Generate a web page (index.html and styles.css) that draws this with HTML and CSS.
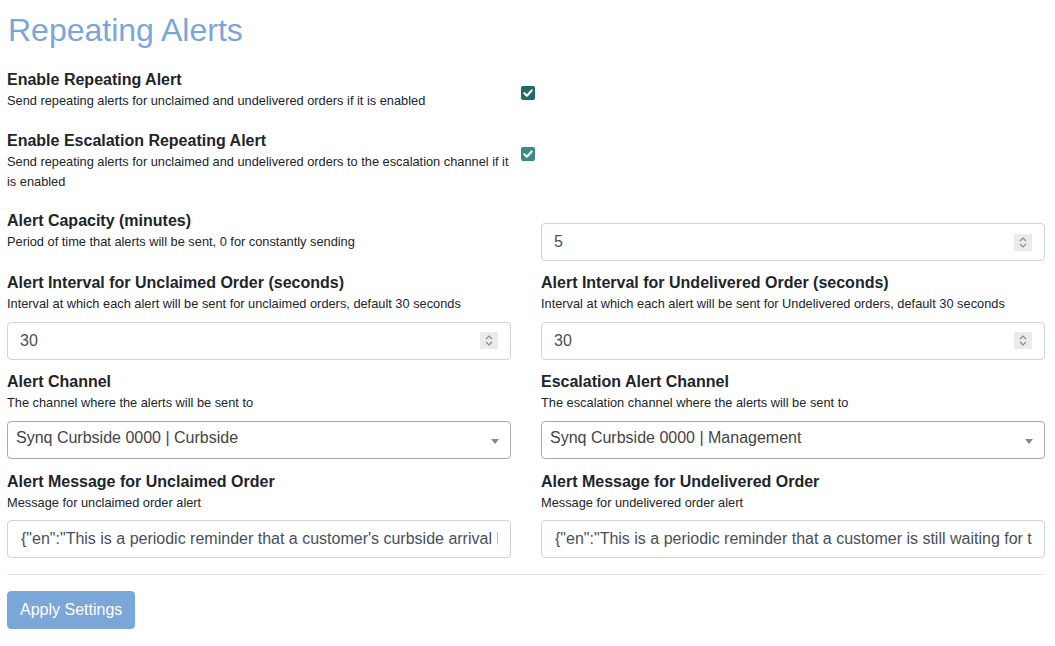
FILE: index.html
```html
<!DOCTYPE html>
<html lang="en">
<head>
<meta charset="utf-8">
<title>Repeating Alerts</title>
<link rel="stylesheet" href="styles.css">
</head>
<body>
<div class="page">
  <h2 class="title">Repeating Alerts</h2>

  <div class="check-row first">
    <div class="check-text">
      <div class="label">Enable Repeating Alert</div>
      <div class="desc">Send repeating alerts for unclaimed and undelivered orders if it is enabled</div>
    </div>
    <span class="checkbox"><svg viewBox="0 0 14 14" width="14" height="14"><path d="M3.3 7.2 L5.9 9.7 L10.7 4.5" fill="none" stroke="#fff" stroke-width="2.2" stroke-linecap="round" stroke-linejoin="round"/></svg></span>
  </div>

  <div class="check-row">
    <div class="check-text">
      <div class="label">Enable Escalation Repeating Alert</div>
      <div class="desc">Send repeating alerts for unclaimed and undelivered orders to the escalation channel if it is enabled</div>
    </div>
    <span class="checkbox light"><svg viewBox="0 0 14 14" width="14" height="14"><path d="M3.3 7.2 L5.9 9.7 L10.7 4.5" fill="none" stroke="#fff" stroke-width="2.2" stroke-linecap="round" stroke-linejoin="round"/></svg></span>
  </div>

  <div class="grid row-capacity">
    <div class="field">
      <div class="label">Alert Capacity (minutes)</div>
      <div class="desc">Period of time that alerts will be sent, 0 for constantly sending</div>
    </div>
    <div class="field">
      <div class="number-input capacity">
        <input class="bare" type="text" value="5">
        <span class="spinner"><svg viewBox="0 0 18 17" width="18" height="17"><path d="M6 7 L9 4 L12 7" fill="none" stroke="#8a8a8a" stroke-width="1.2"/><path d="M6 10 L9 13 L12 10" fill="none" stroke="#8a8a8a" stroke-width="1.2"/></svg></span>
      </div>
    </div>
  </div>

  <div class="grid row-interval">
    <div class="field">
      <div class="label">Alert Interval for Unclaimed Order (seconds)</div>
      <div class="desc">Interval at which each alert will be sent for unclaimed orders, default 30 seconds</div>
      <div class="number-input">
        <input class="bare" type="text" value="30">
        <span class="spinner"><svg viewBox="0 0 18 17" width="18" height="17"><path d="M6 7 L9 4 L12 7" fill="none" stroke="#8a8a8a" stroke-width="1.2"/><path d="M6 10 L9 13 L12 10" fill="none" stroke="#8a8a8a" stroke-width="1.2"/></svg></span>
      </div>
    </div>
    <div class="field">
      <div class="label">Alert Interval for Undelivered Order (seconds)</div>
      <div class="desc">Interval at which each alert will be sent for Undelivered orders, default 30 seconds</div>
      <div class="number-input">
        <input class="bare" type="text" value="30">
        <span class="spinner"><svg viewBox="0 0 18 17" width="18" height="17"><path d="M6 7 L9 4 L12 7" fill="none" stroke="#8a8a8a" stroke-width="1.2"/><path d="M6 10 L9 13 L12 10" fill="none" stroke="#8a8a8a" stroke-width="1.2"/></svg></span>
      </div>
    </div>
  </div>

  <div class="grid row-channel">
    <div class="field">
      <div class="label">Alert Channel</div>
      <div class="desc">The channel where the alerts will be sent to</div>
      <div class="select"><span class="select-text">Synq Curbside 0000 | Curbside</span><b class="arrow"></b></div>
    </div>
    <div class="field">
      <div class="label">Escalation Alert Channel</div>
      <div class="desc">The escalation channel where the alerts will be sent to</div>
      <div class="select"><span class="select-text">Synq Curbside 0000 | Management</span><b class="arrow"></b></div>
    </div>
  </div>

  <div class="grid row-message">
    <div class="field">
      <div class="label">Alert Message for Unclaimed Order</div>
      <div class="desc">Message for unclaimed order alert</div>
      <input class="text-input" type="text" value="{&quot;en&quot;:&quot;This is a periodic reminder that a customer's curbside arrival has not been claimed yet.&quot;}">
    </div>
    <div class="field">
      <div class="label">Alert Message for Undelivered Order</div>
      <div class="desc">Message for undelivered order alert</div>
      <input class="text-input" type="text" value="{&quot;en&quot;:&quot;This is a periodic reminder that a customer is still waiting for their order.&quot;}">
    </div>
  </div>

  <hr class="divider">
  <button class="btn" type="button">Apply Settings</button>
</div>
</body>
</html>
```

FILE: styles.css
```css
* { box-sizing: border-box; }

html, body {
  margin: 0;
  padding: 0;
  background: #fff;
}

body {
  font-family: "Liberation Sans", Arial, Helvetica, sans-serif;
  color: #212529;
}

.page {
  width: 1038px;
  margin-left: 7px;
}

.title {
  margin: 11px 0 18.5px 1px;
  font-size: 32px;
  line-height: 38px;
  font-weight: 400;
  color: #79a6d9;
}

.label {
  font-size: 16px;
  line-height: 23px;
  font-weight: 700;
  color: #212529;
}

.desc {
  font-size: 12.8px;
  line-height: 20px;
  color: #212529;
}

.check-row {
  display: flex;
  align-items: flex-start;
  margin-bottom: 17px;
}

.check-row.first { margin-bottom: 18px; }

.check-text {
  width: 504px;
}

.checkbox {
  display: block;
  width: 14px;
  height: 14px;
  margin: 18.5px 0 0 10px;
  border-radius: 2px;
  background: #1d6c6a;
}

.checkbox svg { display: block; }

.checkbox.light { background: #3b8a86; }

.grid {
  display: grid;
  grid-template-columns: 504px 504px;
  column-gap: 30px;
}

.row-capacity { margin-bottom: 10px; }
.row-interval { margin-bottom: 10.5px; }
.row-channel { margin-bottom: 11.5px; }

.row-capacity .number-input { margin-top: 14.5px; }

.number-input,
.select,
.text-input {
  display: flex;
  align-items: center;
  width: 100%;
  height: 38px;
  margin-top: 7.5px;
  border: 1px solid #ced4da;
  border-radius: 4px;
  background: #fff;
}

.row-message .text-input { margin-top: 7px; }

.number-input {
  padding: 0 12px 0 12px;
}

.bare {
  flex: 1;
  min-width: 0;
  border: 0;
  outline: 0;
  padding: 0;
  margin: 0;
  font-family: inherit;
  font-size: 16px;
  color: #495057;
  background: transparent;
}

.spinner {
  display: block;
  width: 18px;
  height: 17px;
  background: #ebebed;
}

.spinner svg { display: block; }

.select {
  justify-content: space-between;
  padding: 0 8px 0 8px;
  border-color: #aaa;
}

.select-text {
  font-size: 16px;
  color: #444;
  margin-bottom: 4px;
}

.arrow {
  display: block;
  width: 0;
  height: 0;
  margin-right: 3px;
  margin-top: 3px;
  border-style: solid;
  border-width: 5px 4px 0 4px;
  border-color: #888 transparent transparent transparent;
}

.text-input {
  padding: 0 12px 0 13px;
  font-family: inherit;
  font-size: 16px;
  color: #495057;
  outline: 0;
}

.divider {
  margin: 16px 0 16px 0;
  border: 0;
  border-top: 1px solid #e3e5e8;
  height: 0;
}

.btn {
  display: block;
  height: 38px;
  padding: 0 12px;
  border: 1px solid #7aa6d8;
  border-radius: 4px;
  background: #7aa6d8;
  color: #fff;
  font-family: inherit;
  font-size: 16px;
  line-height: 24px;
}
```
